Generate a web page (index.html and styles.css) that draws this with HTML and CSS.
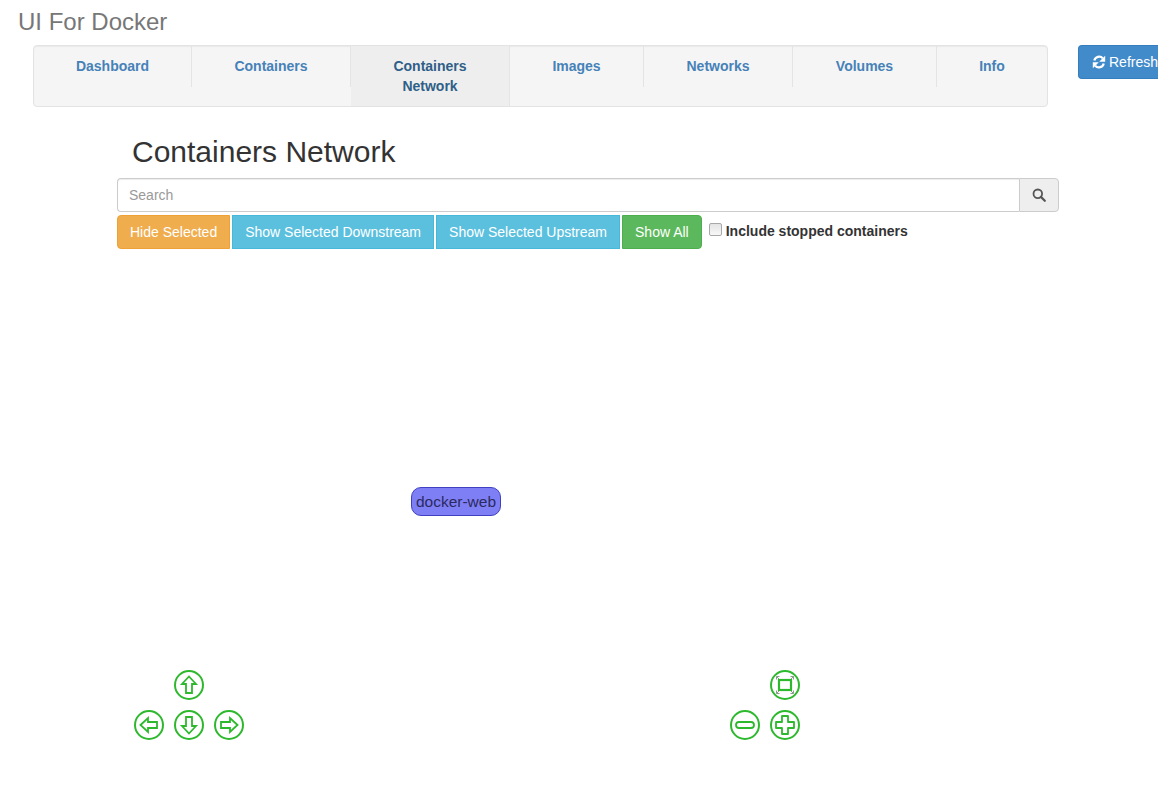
FILE: index.html
```html
<!DOCTYPE html>
<html lang="en">
<head>
<meta charset="utf-8">
<title>UI For Docker</title>
<link rel="stylesheet" href="styles.css">
</head>
<body>
<header class="top">
  <div class="brand">UI For Docker</div>
  <div class="navrow">
    <nav class="nav">
      <a class="nav-item">Dashboard</a>
      <a class="nav-item">Containers</a>
      <a class="nav-item active">Containers<br>Network</a>
      <a class="nav-item">Images</a>
      <a class="nav-item">Networks</a>
      <a class="nav-item">Volumes</a>
      <a class="nav-item last">Info</a>
    </nav>
    <button class="refresh">
      <svg class="refresh-icon" viewBox="0 0 14 14" width="14" height="14"><path d="M2.300 5.600A5 5 0 0 1 10.800 3.200" fill="none" stroke="#fff" stroke-width="2.200"/><path d="M13.200 0.800V6.800H7.200Z" fill="#fff"/><path d="M11.700 8.400A5 5 0 0 1 3.200 10.800" fill="none" stroke="#fff" stroke-width="2.200"/><path d="M0.800 13.200V7.200H6.800Z" fill="#fff"/></svg>
      <span>Refresh</span>
    </button>
  </div>
</header>
<main class="main">
  <h2 class="title">Containers Network</h2>
  <div class="search">
    <input class="search-input" type="text" placeholder="Search">
    <button class="search-btn" aria-label="Search">
      <svg viewBox="0 0 14 14" width="14" height="14"><circle cx="5.800" cy="5.800" r="4.300" fill="none" stroke="#555" stroke-width="1.800"/><path d="M8.900 8.900L12.800 12.800" stroke="#555" stroke-width="2.200" stroke-linecap="round"/></svg>
    </button>
  </div>
  <div class="actions">
    <button class="btn warning">Hide Selected</button>
    <button class="btn info">Show Selected Downstream</button>
    <button class="btn info">Show Selected Upstream</button>
    <button class="btn success">Show All</button>
    <label class="stopped"><input class="check" type="checkbox"><span>Include stopped containers</span></label>
  </div>
  <div class="graph">
    <div class="node">docker-web</div>
    <svg class="ctl c-up" viewBox="0 0 30 30"><circle class="ring" cx="15" cy="15" r="14"/><path class="glyph" d="M15 6.500L22 14H18V23H12V14H8Z"/></svg>
    <svg class="ctl c-left" viewBox="0 0 30 30"><circle class="ring" cx="15" cy="15" r="14"/><path class="glyph" d="M6.500 15L14 8V12H23V18H14V22Z"/></svg>
    <svg class="ctl c-down" viewBox="0 0 30 30"><circle class="ring" cx="15" cy="15" r="14"/><path class="glyph" d="M15 23.500L22 16H18V7H12V16H8Z"/></svg>
    <svg class="ctl c-right" viewBox="0 0 30 30"><circle class="ring" cx="15" cy="15" r="14"/><path class="glyph" d="M23.500 15L16 8V12H7V18H16V22Z"/></svg>
    <svg class="ctl c-fit" viewBox="0 0 30 30"><circle class="ring" cx="15" cy="15" r="14"/><path class="corner" d="M6.500 9.500V6.500H9.500M6.500 6.500L9.500 9.500M23.500 9.500V6.500H20.500M23.500 6.500L20.500 9.500M6.500 20.500V23.500H9.500M6.500 23.500L9.500 20.500M23.500 20.500V23.500H20.500M23.500 23.500L20.500 20.500"/><rect class="glyph thick" x="9" y="10" width="12" height="10"/></svg>
    <svg class="ctl c-minus" viewBox="0 0 30 30"><circle class="ring" cx="15" cy="15" r="14"/><rect class="glyph" x="6" y="12" width="18" height="6" rx="3"/></svg>
    <svg class="ctl c-plus" viewBox="0 0 30 30"><circle class="ring" cx="15" cy="15" r="14"/><path class="glyph" d="M12 6H18V12H24V18H18V24H12V18H6V12H12Z" stroke-linejoin="round"/></svg>
  </div>
</main>
</body>
</html>
```
FILE: styles.css
```css
* { box-sizing: border-box; }
html, body { margin: 0; padding: 0; height: 787px; overflow: hidden; background: #fff; }
body { font-family: "Liberation Sans", Arial, sans-serif; font-size: 14px; line-height: 20px; color: #333; }
.top { padding: 6px 0 0 18px; }
.brand { font-size: 24px; line-height: 32px; color: #777; margin-bottom: 7px; }
.navrow { display: flex; align-items: flex-start; padding-left: 15px; }
.nav {
  display: grid;
  grid-template-columns: 158px 159px 159px 134px 149px 144px 111px;
  width: 1015px; height: 62px; flex: none;
  background: #f5f5f5; border: 1px solid #e3e3e3; border-radius: 4px;
  box-shadow: inset 0 1px 1px rgba(0,0,0,.05);
}
.nav-item {
  position: relative; text-align: center; font-weight: 700; color: #4682b8;
  padding: 10px 15px; height: 60px; border-right: 1px solid transparent;
}
.nav-item::after {
  content: ""; position: absolute; right: -1px; top: 0; height: 41px; width: 1px; background: #e4e4e4;
}
.nav-item.last::after { display: none; }
.nav-item.active { background: #eee; color: #2f5f88; border-right-color: #e4e4e4; }
.refresh {
  margin-left: 30px; flex: none; height: 34px; width: 80px; padding: 0 0 0 13px; overflow: hidden;
  display: flex; align-items: center; gap: 3px; justify-content: flex-start; white-space: nowrap;
  font: 14px/20px "Liberation Sans", Arial, sans-serif; color: #fff;
  background: #428bca; border: 1px solid #357ebd; border-right: 0; border-radius: 4px 0 0 4px;
}
.refresh-icon { flex: none; }
.main { padding: 0 0 0 117px; width: 1059px; }
.title { font-size: 30px; line-height: 33px; font-weight: 400; color: #333; margin: 28px 0 10px 15px; }
.search { display: flex; height: 34px; }
.search-input {
  flex: 1; min-width: 0; height: 34px; padding: 6px 11px; font: 14px/20px "Liberation Sans", Arial, sans-serif; color: #555;
  border: 1px solid #ccc; border-right: 0; border-radius: 4px 0 0 4px; background: #fff;
  box-shadow: inset 0 1px 1px rgba(0,0,0,.075); outline: none;
}
.search-input::placeholder { color: #999; }
.search-btn {
  flex: none; width: 40px; height: 34px; padding: 0; display: flex; align-items: center; justify-content: center;
  background: #eee; border: 1px solid #ccc; border-radius: 0 4px 4px 0;
}
.actions { display: flex; align-items: flex-start; gap: 2px; margin-top: 3px; }
.btn {
  height: 34px; padding: 0 12px; font: 14px/20px "Liberation Sans", Arial, sans-serif; color: #fff; border: 1px solid; border-radius: 0; white-space: nowrap;
}
.warning { background: #f0ad4e; border-color: #eea236; border-radius: 4px 0 0 4px; }
.info { background: #5bc0de; border-color: #46b8da; }
.success { background: #5cb85c; border-color: #4cae4c; border-radius: 0 4px 4px 0; }
.stopped { display: flex; align-items: flex-start; font-weight: 700; margin-left: 5px; padding-top: 6px; height: 34px; }
.check {
  appearance: none; width: 13px; height: 13px; margin: 2px 4px 0 0; flex: none;
  background: linear-gradient(#e4e4e4, #f8f8f8); border: 1px solid #a8a8a8; border-radius: 2px;
}
.graph { position: relative; height: 540px; width: 942px; }
.node {
  position: absolute; left: 294px; top: 238px; width: 90px; height: 29px;
  background: #7f7ff5; border: 1px solid #4040c0; border-radius: 10px;
  font-size: 15.5px; line-height: 27px; text-align: center; color: #2a2a60; white-space: nowrap;
}
.ctl { position: absolute; width: 30px; height: 30px; }
.ring { fill: #fff; stroke: #2eb82e; stroke-width: 2; }
.glyph { fill: #fff; stroke: #2eb82e; stroke-width: 1.800; }
.thick { stroke-width: 2.200; }
.corner { fill: none; stroke: #8f9a8f; stroke-width: 1; }
.c-up { left: 57px; top: 421px; }
.c-left { left: 17px; top: 461px; }
.c-down { left: 57px; top: 461px; }
.c-right { left: 97px; top: 461px; }
.c-fit { left: 653px; top: 421px; }
.c-minus { left: 613px; top: 461px; }
.c-plus { left: 653px; top: 461px; }
```
